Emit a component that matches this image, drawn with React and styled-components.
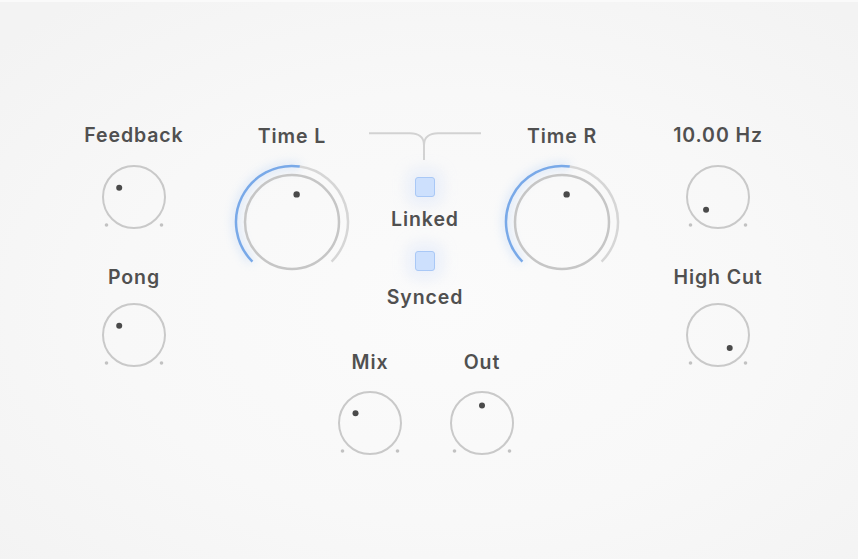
import React, { useId } from 'react';
import styled, { createGlobalStyle } from 'styled-components';

const GlobalStyle = createGlobalStyle`
  html, body {
    margin: 0;
    padding: 0;
  }
  body {
    width: 858px;
    height: 559px;
    overflow: hidden;
    font-family: Inter, "Noto Sans", sans-serif;
  }
`;

const Panel = styled.div`
  width: 858px;
  height: 559px;
  box-sizing: border-box;
  display: flex;
  align-items: flex-start;
  padding: 125px 0 0 74px;
  background:
    linear-gradient(to bottom, #fafafa 0, #fafafa 2px, transparent 2px),
    radial-gradient(ellipse 70% 70% at 52% 55%, #fbfbfb 0%, #f8f8f8 55%, #f3f3f3 100%);
`;

const Column = styled.div`
  width: ${({ $width }) => $width}px;
  display: flex;
  flex-direction: column;
  align-items: center;
`;

const Middle = styled.div`
  width: 470px;
  display: flex;
  flex-direction: column;
`;

const TopRow = styled.div`
  display: flex;
  align-items: flex-start;
`;

const BottomRow = styled.div`
  display: flex;
  padding-left: 120px;
  margin-top: 45px;
`;

const Group = styled.div`
  display: flex;
  flex-direction: column;
  align-items: center;
  gap: ${({ $gap }) => $gap}px;
  margin-top: ${({ $top = 0 }) => $top}px;
`;

const Label = styled.div`
  font-size: 19.5px;
  line-height: 20px;
  height: 20px;
  font-weight: 600;
  letter-spacing: 0.9px;
  color: #505050;
  white-space: nowrap;
`;

const Bracket = styled.svg`
  display: block;
  margin-top: 7px;
  flex-shrink: 0;
`;

const Toggle = styled.div`
  width: 20px;
  height: 20px;
  box-sizing: border-box;
  border-radius: 3px;
  background: #cde0fd;
  border: 1.5px solid #a9c8f6;
  box-shadow: 0 0 14px 8px rgba(205, 222, 250, 0.35);
  margin-top: ${({ $top }) => $top}px;
`;

const Spaced = styled.div`
  margin-top: ${({ $top }) => $top}px;
`;

const KnobSvg = styled.svg`
  display: block;
  overflow: visible;
`;

const rad = (deg) => (deg * Math.PI) / 180;
const pt = (cx, cy, r, deg) => [cx + r * Math.sin(rad(deg)), cy - r * Math.cos(rad(deg))];

const arc = (cx, cy, r, from, to) => {
  const [x1, y1] = pt(cx, cy, r, from);
  const [x2, y2] = pt(cx, cy, r, to);
  const large = to - from > 180 ? 1 : 0;
  return `M${x1} ${y1} A${r} ${r} 0 ${large} 1 ${x2} ${y2}`;
};

const SmallKnob = ({ angle }) => {
  const [dx, dy] = pt(35, 33, 17.5, angle);
  return (
    <KnobSvg width="70" height="66" viewBox="0 0 70 66">
      <circle cx="35" cy="33" r="31" fill="none" stroke="#c9c9c9" strokeWidth="2" />
      <circle cx="7.5" cy="61" r="1.8" fill="#c2c2c2" />
      <circle cx="62.5" cy="61" r="1.8" fill="#c2c2c2" />
      <circle cx={dx} cy={dy} r="3" fill="#4a4a4a" />
    </KnobSvg>
  );
};

const BigKnob = ({ value, angle }) => {
  const id = useId().replace(/:/g, '');
  const [dx, dy] = pt(62, 62, 28, angle);
  return (
    <KnobSvg width="124" height="124" viewBox="0 0 124 124">
      <defs>
        <filter id={`glow${id}`} x="-50%" y="-50%" width="200%" height="200%">
          <feGaussianBlur stdDeviation="5" />
        </filter>
      </defs>
      <path d={arc(62, 62, 56, -135, value)} fill="none" stroke="#bcd4f6" strokeWidth="8" opacity="0.45" filter={`url(#glow${id})`} />
      <path d={arc(62, 62, 56, value, 135)} fill="none" stroke="#d6d6d6" strokeWidth="2.5" />
      <path d={arc(62, 62, 56, -135, value)} fill="none" stroke="#79a9e8" strokeWidth="2.5" />
      <circle cx="62" cy="62" r="47" fill="none" stroke="#c6c6c6" strokeWidth="2.5" />
      <circle cx={dx} cy={dy} r="3.2" fill="#4a4a4a" />
    </KnobSvg>
  );
};

const App = () => {
  return (
    <>
      <GlobalStyle />
      <Panel>
        <Column $width={120}>
          <Group $gap={19}>
            <Label>Feedback</Label>
            <SmallKnob angle={-57.7} />
          </Group>
          <Group $gap={15} $top={37}>
            <Label>Pong</Label>
            <SmallKnob angle={-57.7} />
          </Group>
        </Column>

        <Middle>
          <TopRow>
            <Column $width={196}>
              <Group $gap={14} $top={1}>
                <Label>Time L</Label>
                <BigKnob value={8} angle={9.5} />
              </Group>
            </Column>
            <Column $width={70}>
              <Bracket width="112" height="28" viewBox="0 0 112 28">
                <path d="M0 1.3 H41 C49 1.3 55 5 55 13 V28 M112 1.3 H69 C61 1.3 55 5 55 13" fill="none" stroke="#d2d2d2" strokeWidth="2" />
              </Bracket>
              <Toggle $top={17} />
              <Spaced $top={12}>
                <Label>Linked</Label>
              </Spaced>
              <Toggle $top={22} />
              <Spaced $top={16}>
                <Label>Synced</Label>
              </Spaced>
            </Column>
            <Column $width={204}>
              <Group $gap={14} $top={1}>
                <Label>Time R</Label>
                <BigKnob value={8} angle={9.5} />
              </Group>
            </Column>
          </TopRow>
          <BottomRow>
            <Column $width={112}>
              <Group $gap={18}>
                <Label>Mix</Label>
                <SmallKnob angle={-55.8} />
              </Group>
            </Column>
            <Column $width={112}>
              <Group $gap={18}>
                <Label>Out</Label>
                <SmallKnob angle={0} />
              </Group>
            </Column>
          </BottomRow>
        </Middle>

        <Column $width={108}>
          <Group $gap={19}>
            <Label>10.00 Hz</Label>
            <SmallKnob angle={-137} />
          </Group>
          <Group $gap={15} $top={37}>
            <Label>High Cut</Label>
            <SmallKnob angle={138} />
          </Group>
        </Column>
      </Panel>
    </>
  );
};

export default App;
